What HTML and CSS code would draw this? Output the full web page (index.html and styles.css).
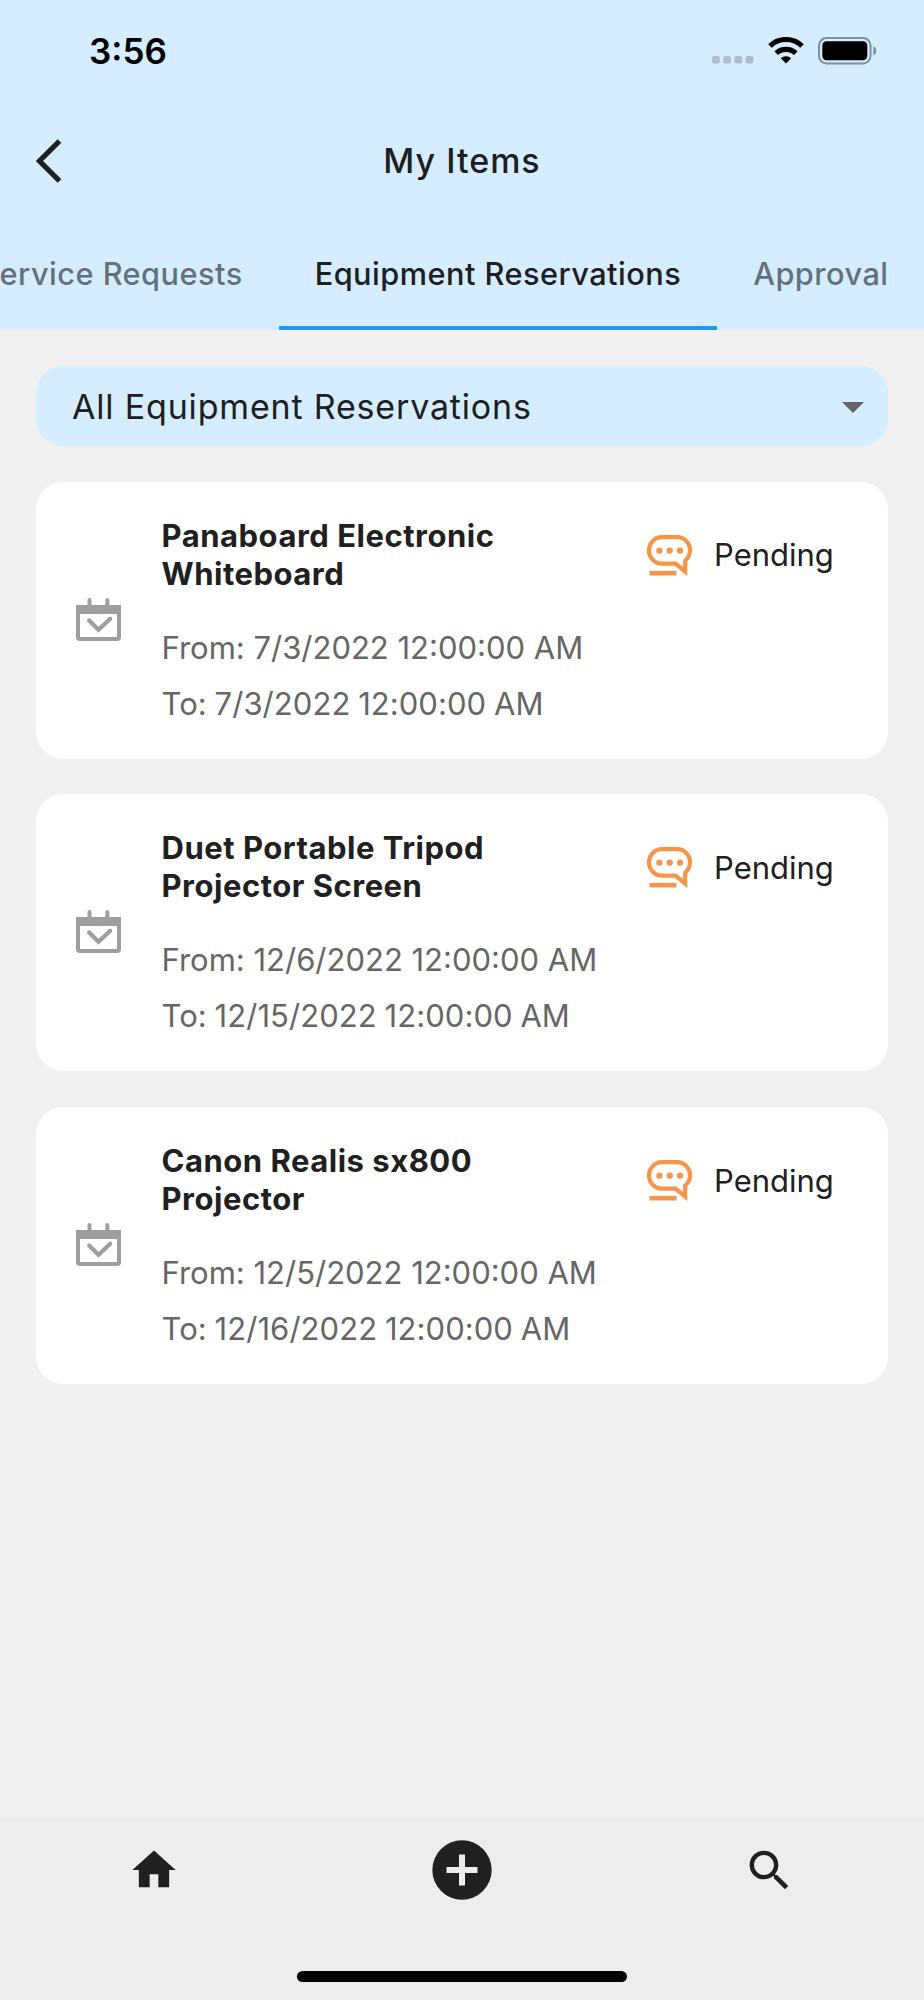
FILE: index.html
```html
<!DOCTYPE html>
<html lang="en">
<head>
<meta charset="utf-8">
<title>My Items</title>
<link rel="stylesheet" href="styles.css">
</head>
<body>
<svg class="defs" width="0" height="0" aria-hidden="true">
  <symbol id="calendar" viewBox="0 0 45 43"><rect x="2" y="9" width="41" height="32" rx="2" fill="none" stroke="#9e9e9e" stroke-width="4"/><path d="M0 7h45v9H0z" fill="#9e9e9e"/><path d="M13.500 9V2M31.300 9V2" stroke="#9e9e9e" stroke-width="4" stroke-linecap="round"/><path d="M13.200 22.500l9.300 9.300 11.700-11" fill="none" stroke="#9e9e9e" stroke-width="4.200" stroke-linecap="round"/></symbol>
  <symbol id="pending" viewBox="0 0 45 42"><path d="M15 2.200h15a13 13 0 0 1 13 13c0 4.500-2 8-4.800 10.300V36.500L28.500 28.700H15a13 13 0 0 1-13-13.200 13 13 0 0 1 13-13.300z" fill="none" stroke="#f3964a" stroke-width="4.200"/><path d="M2.500 38.200h27" stroke="#f3964a" stroke-width="4.600"/><g fill="#f3964a"><circle cx="12.400" cy="15.600" r="3.200"/><circle cx="22.700" cy="15.600" r="3.200"/><circle cx="33" cy="15.600" r="3.200"/></g></symbol>
</svg>
<div class="screen">
  <header class="top">
    <div class="status">
      <span class="time">3:56</span>
      <div class="indicators">
        <svg class="signal" width="42" height="8" viewBox="0 0 42 8" fill="#adbfcd"><rect width="7.800" height="7.500" rx="2"/><rect x="11.200" width="7.800" height="7.500" rx="2"/><rect x="22.400" width="7.800" height="7.500" rx="2"/><rect x="33.500" width="7.800" height="7.500" rx="2"/></svg>
        <svg class="wifi" width="36" height="27" viewBox="0 0 36 27"><g fill="none" stroke="#000" stroke-width="5.200"><path d="M2 9A23 23 0 0 1 34 9"/><path d="M8.200 16.200A14.500 14.500 0 0 1 27.800 16.200"/></g><path d="M18 26.500l-5.200-5.300a8 8 0 0 1 10.400 0z"/></svg>
        <svg class="battery" width="60" height="28" viewBox="0 0 60 28"><rect x="1" y="1" width="51.500" height="25.500" rx="7.500" fill="none" stroke="#7f8f9b" stroke-width="2"/><rect x="4.300" y="4.300" width="45" height="19" rx="4.200"/><path d="M55.300 9.300c4 1.500 4 7.500 0 9z" fill="#7f8f9b"/></svg>
      </div>
    </div>
    <div class="bar">
      <svg class="back" width="26" height="44" viewBox="0 0 26 44"><path d="M23.500 2L3.500 22l20 20" fill="none" stroke="#1d2022" stroke-width="5.300"/></svg>
      <h1 class="heading">My Items</h1>
    </div>
    <nav class="tabs">
      <a class="tab">Service Requests</a>
      <a class="tab active">Equipment Reservations</a>
      <a class="tab">Approval</a>
    </nav>
  </header>
  <main class="content">
    <div class="select"><span>All Equipment Reservations</span><svg class="caret" width="22" height="11" viewBox="0 0 22 11"><path d="M0 0h22L11 11z" fill="#626466"/></svg></div>
    <article class="card">
      <svg class="cal" width="45" height="43"><use href="#calendar"/></svg>
      <div class="info"><h2>Panaboard Electronic<br>Whiteboard</h2><p>From: 7/3/2022 12:00:00 AM</p><p class="to">To: 7/3/2022 12:00:00 AM</p></div>
      <div class="state"><svg width="45" height="42"><use href="#pending"/></svg><span class="label">Pending</span></div>
    </article>
    <article class="card">
      <svg class="cal" width="45" height="43"><use href="#calendar"/></svg>
      <div class="info"><h2>Duet Portable Tripod<br>Projector Screen</h2><p>From: 12/6/2022 12:00:00 AM</p><p class="to">To: 12/15/2022 12:00:00 AM</p></div>
      <div class="state"><svg width="45" height="42"><use href="#pending"/></svg><span class="label">Pending</span></div>
    </article>
    <article class="card">
      <svg class="cal" width="45" height="43"><use href="#calendar"/></svg>
      <div class="info"><h2>Canon Realis sx800<br>Projector</h2><p>From: 12/5/2022 12:00:00 AM</p><p class="to">To: 12/16/2022 12:00:00 AM</p></div>
      <div class="state"><svg width="45" height="42"><use href="#pending"/></svg><span class="label">Pending</span></div>
    </article>
  </main>
  <footer class="bottom">
    <div class="actions">
      <svg width="52" height="52" viewBox="0 0 24 24" fill="#202020"><path d="M10 20v-6h4v6h5v-8h3L12 3 2 12h3v8z"/></svg>
      <svg width="60" height="60" viewBox="0 0 60 60"><circle cx="30" cy="30" r="29.700" fill="#202020"/><path d="M30 14.500v31M14.500 30h31" stroke="#ededed" stroke-width="6"/></svg>
      <svg class="search" width="53" height="53" viewBox="0 0 24 24" fill="#202020"><path d="M15.500 14h-.79l-.28-.27A6.471 6.471 0 0 0 16 9.500 6.500 6.500 0 1 0 9.500 16c1.610 0 3.090-.59 4.230-1.570l.27.28v.79l5 4.990L20.490 19l-4.990-5zm-6 0C7.010 14 5 11.990 5 9.500S7.010 5 9.500 5 14 7.010 14 9.500 11.990 14 9.500 14z"/></svg>
    </div>
    <div class="home-bar"></div>
  </footer>
</div>
</body>
</html>
```
FILE: styles.css
```css
* { box-sizing: border-box; }
body { margin: 0; font-family: Inter, "Liberation Sans", sans-serif; color: #202020; }
svg { display: block; flex: none; }
h1, h2, p { margin: 0; font-weight: 400; }
.defs { position: absolute; }
.screen { width: 924px; height: 2000px; display: flex; flex-direction: column; overflow: hidden; background: #f0f0f0; }
.top { height: 330px; background: #d5edff; color: #1d2022; }
.status { height: 101px; padding: 0 46px 0 89px; display: flex; justify-content: space-between; align-items: center; }
.time { font-size: 35px; font-weight: 600; color: #000; }
.indicators { display: flex; align-items: flex-end; height: 28px; }
.signal { margin-bottom: 1px; }
.wifi { margin: 0 0 1px 14px; }
.battery { margin-left: 14px; }
.bar { height: 119px; padding: 0 36px; display: grid; grid-template-columns: 26px 1fr 26px; align-items: center; }
.heading { font-size: 34px; font-weight: 450; letter-spacing: 1px; text-align: center; }
.tabs { height: 110px; display: flex; margin-left: -56.700px; }
.tab { flex: none; padding: 0 36px; font-size: 30.700px; font-weight: 450; letter-spacing: 0.480px; line-height: 107px; color: #65717a; }
.active { color: #1d2022; border-bottom: 4px solid #2196f3; }
.content { flex: 1; padding: 36px; }
.select { height: 80px; border-radius: 27px; padding: 0 24px 0 36px; background: #d5edff; display: flex; align-items: center; justify-content: space-between; font-size: 34px; font-weight: 380; letter-spacing: 0.820px; color: #1d2022; }
.caret { margin-top: 2px; }
.card { height: 277px; margin-top: 35.700px; border-radius: 27px; background: #fff; display: flex; padding: 0 0 0 40px; }
.cal { align-self: center; margin-bottom: 2px; }
.info { width: 526px; padding: 35px 0 0 40.500px; font-size: 31px; }
.info h2 { font-size: 31px; font-weight: 680; line-height: 38px; letter-spacing: 0.510px; margin-bottom: 27px; }
.info p { line-height: 56px; color: #666; font-weight: 380; }
.info .to { letter-spacing: 0.060px; word-spacing: -1px; }
.state { display: flex; align-items: center; gap: 22px; height: 42px; margin-top: 53px; font-size: 31px; font-weight: 380; }
.label { padding-bottom: 1.500px; }
.bottom { height: 183.500px; background: #ededed; }
.actions { display: grid; grid-template-columns: repeat(3, 1fr); justify-items: center; align-items: center; height: 107px; }
.search { margin-right: 2px; }
.home-bar { width: 330px; height: 11px; border-radius: 6px; background: #000; margin: 47.500px auto 0; }
```
